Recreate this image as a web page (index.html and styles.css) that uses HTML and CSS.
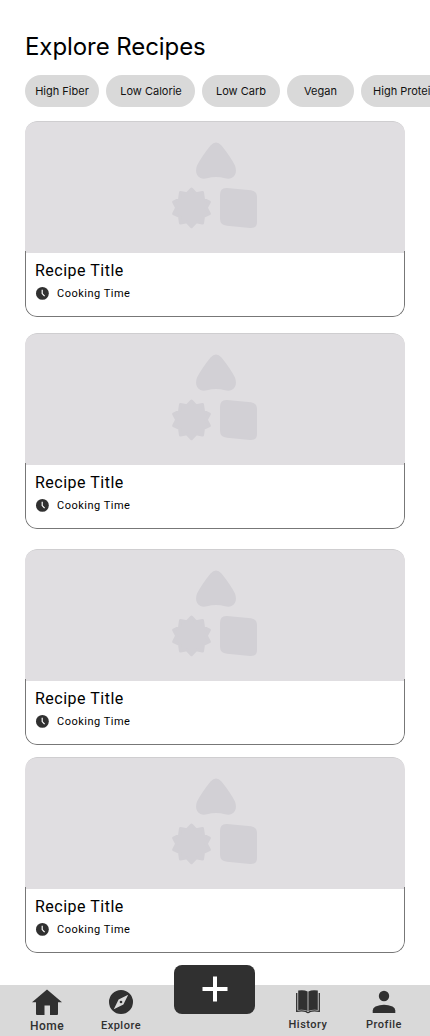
FILE: index.html
```html
<!DOCTYPE html>
<html lang="en">
<head>
<meta charset="utf-8">
<title>Explore Recipes</title>
<link rel="stylesheet" href="styles.css">
</head>
<body>
<svg class="defs" aria-hidden="true">
  <symbol id="shapes" viewBox="0 0 90 90">
    <path d="M40.500 5.500Q46 -.500 51.500 5.500Q60 16 65 25.500Q68 34.500 61.500 37.900Q59 39.300 55 38.200Q46 35.800 37 38.200Q33 39.300 30.500 37.900Q24 34.500 27 25.500Q32 16 40.500 5.500Z"/>
    <path d="M57 48L81 50.300Q87 51 87 57V82Q87 88.500 80 88L57 85.800Q50 85 50 79V55Q50 47.500 57 48Z"/>
    <path transform="translate(21.500 67.800)" stroke="#d2d0d5" stroke-width="3" stroke-linejoin="round" d="M0 -18.800L4.570 -14.080L11.050 -15.210L11.970 -8.700L17.880 -5.810L14.800 0L17.880 5.810L11.970 8.700L11.050 15.210L4.570 14.080L0 18.800L-4.570 14.080L-11.050 15.210L-11.970 8.700L-17.880 5.810L-14.800 0L-17.880 -5.810L-11.970 -8.700L-11.050 -15.210L-4.570 -14.080Z"/>
  </symbol>
  <symbol id="clock" viewBox="0 0 14 14">
    <circle cx="7.400" cy="6.400" r="6.400"/>
    <path d="M7.200 2.800V6.600L9.600 9.200" fill="none" stroke="#fff" stroke-width="1.200"/>
  </symbol>
</svg>
<main class="screen">
  <h1 class="heading">Explore Recipes</h1>
  <div class="chips">
    <span class="chip fiber">High Fiber</span>
    <span class="chip calorie">Low Calorie</span>
    <span class="chip carb">Low Carb</span>
    <span class="chip vegan">Vegan</span>
    <span class="chip protein">High Protein</span>
  </div>
  <section class="recipes">
    <article class="card">
      <div class="media"><svg class="shapes"><use href="#shapes"/></svg></div>
      <div class="info"><h2 class="title">Recipe Title</h2><p class="time"><svg class="clock"><use href="#clock"/></svg>Cooking Time</p></div>
    </article>
    <article class="card second">
      <div class="media"><svg class="shapes"><use href="#shapes"/></svg></div>
      <div class="info"><h2 class="title">Recipe Title</h2><p class="time"><svg class="clock"><use href="#clock"/></svg>Cooking Time</p></div>
    </article>
    <article class="card third">
      <div class="media"><svg class="shapes"><use href="#shapes"/></svg></div>
      <div class="info"><h2 class="title">Recipe Title</h2><p class="time"><svg class="clock"><use href="#clock"/></svg>Cooking Time</p></div>
    </article>
    <article class="card fourth">
      <div class="media"><svg class="shapes"><use href="#shapes"/></svg></div>
      <div class="info"><h2 class="title">Recipe Title</h2><p class="time"><svg class="clock"><use href="#clock"/></svg>Cooking Time</p></div>
    </article>
  </section>
  <nav class="nav">
    <a class="item home">
      <svg class="icon home-icon" viewBox="0 0 30 27"><path d="M15 .500L30 13.200H26V25Q26 26 25 26H18V16.500H12.500V26H5Q4 26 4 25V13.200H0Z"/></svg>
      <span>Home</span>
    </a>
    <a class="item explore">
      <svg class="icon" viewBox="0 0 24 24"><path fill-rule="evenodd" d="M12 0A12 12 0 1 1 12 24A12 12 0 1 1 12 0ZM19.200 4.800L9.600 9.600L4.800 19.200L14.400 14.400Z"/><circle cx="12" cy="12" r="1.300"/></svg>
      <span>Explore</span>
    </a>
    <a class="add" aria-label="Add recipe"><svg class="plus" viewBox="0 0 26 26"><path d="M13 .500V25.500M.500 13H25.500" stroke="#fff" stroke-width="4"/></svg></a>
    <a class="item history">
      <svg class="icon" viewBox="0 0 24 24"><path d="M2.200 .600Q8 -.400 11.600 1.600V21Q8 19.200 2.200 19.900ZM12.400 1.600Q16 -.400 21.800 .600V19.900Q16 19.200 12.400 21Z"/><path d="M.700 3V21.300Q7 20.200 10.300 21.700Q12 23.300 13.700 21.700Q17 20.200 23.300 21.300V3" fill="none" stroke="#303030" stroke-width="1.300"/></svg>
      <span>History</span>
    </a>
    <a class="item profile">
      <svg class="icon" viewBox="0 0 24 24"><circle cx="12" cy="6" r="5.200"/><path d="M.700 23V20.500Q.700 18 3.500 16.600Q12 12.800 20.500 16.600Q23.300 18 23.300 20.500V23Z"/></svg>
      <span>Profile</span>
    </a>
  </nav>
</main>
</body>
</html>
```
FILE: styles.css
```css
* { box-sizing: border-box; }
body { margin: 0; background: #fff; color: #000; font-family: Roboto, sans-serif; }
.defs { display: none; }
.screen { width: 430px; height: 1036px; overflow: hidden; display: flex; flex-direction: column; }
.heading { margin: 32px 0 0 25px; height: 30px; font: 400 24px/30px Inter, sans-serif; letter-spacing: -.070px; }
.chips { display: flex; gap: 7px; margin: 13px 0 0 25px; height: 32px; }
.chip { flex: none; height: 32px; border-radius: 16px; background: #d9d9d9; font: 400 11px/32px Inter, sans-serif; color: #111; text-align: center; white-space: nowrap; }
.fiber { width: 74px; }
.calorie { width: 89px; padding-left: 1px; }
.carb { width: 78px; }
.vegan { width: 67px; }
.protein { width: 88px; }
.recipes { padding: 14px 25px 0; flex: 1; }
.card { height: 196px; border-radius: 12px; overflow: hidden; }
.second { margin-top: 16px; }
.third { margin-top: 20.400px; }
.fourth { margin-top: 11.600px; }
.media { height: 132px; padding: 18px 0 0 145px; background: #e0dee1; border-top: 1px solid #cfced0; border-radius: 12px 12px 0 0; }
.shapes { display: block; width: 90px; height: 90px; fill: #d2d0d5; }
.info { position: relative; height: 66px; margin-top: -2px; padding: 11px 9px 0; border: 1px solid #777; border-top: 0; border-radius: 0 0 12px 12px; }
.title { margin: 0; font-size: 16px; line-height: 18px; font-weight: 400; letter-spacing: .5px; }
.time { display: flex; align-items: center; gap: 8px; height: 16px; margin: 6px 0 0; font-size: 11px; line-height: 16px; letter-spacing: .5px; }
.clock { width: 14px; height: 14px; fill: #303030; }
.nav { height: 51px; flex: none; display: grid; grid-template-columns: 94px 54px 133px 54px 98px; background: #d9d9d9; color: #303030; }
.item { display: flex; flex-direction: column; align-items: center; padding-top: 5px; font-size: 11px; line-height: 14px; font-weight: 500; letter-spacing: .5px; }
.icon { width: 24px; height: 24px; fill: #303030; flex: none; }
.item span { margin-top: 3px; }
.home { font-size: 12px; padding-top: 4px; }
.home-icon { width: 30px; height: 27px; }
.explore span, .history span, .profile span { margin-top: 4px; }
.explore span { margin-top: 5px; }
.explore { padding-top: 5px; }
.add { width: 81px; height: 49px; margin: -20px 0 0 26px; border-radius: 8px; background: #303030; display: flex; align-items: center; justify-content: center; }
.plus { width: 26px; height: 26px; margin-top: -1px; }
```
